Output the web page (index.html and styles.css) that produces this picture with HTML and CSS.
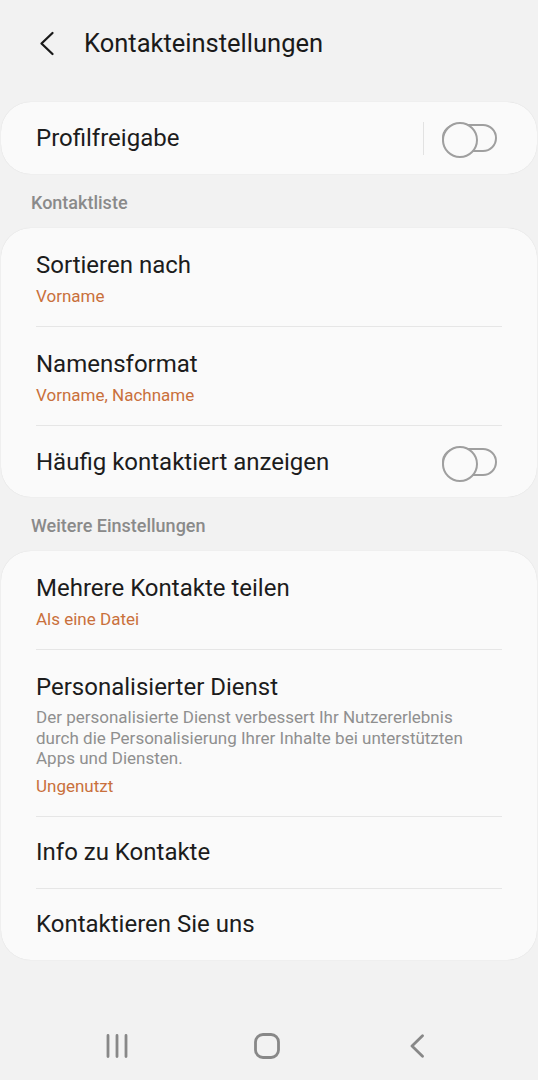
FILE: index.html
```html
<!DOCTYPE html>
<html lang="de">
<head>
  <meta charset="UTF-8" />
  <meta name="viewport" content="width=device-width, initial-scale=1.0"/>
  <title>Kontakteinstellungen</title>
  <link rel="stylesheet" href="styles.css">
</head>
<body>
  <div class="app-bar">
    <a href="#" class="back-btn" aria-label="Zurück">
      <svg width="16" height="25" viewBox="0 0 16 25">
        <path d="M13.5 2 L2.5 12.5 L13.5 23" fill="none" stroke="#1a1a1a" stroke-width="2.3" stroke-linecap="round" stroke-linejoin="round"/>
      </svg>
    </a>
    <h1>Kontakteinstellungen</h1>
  </div>

  <main class="content">
    <div class="card">
      <div class="row single">
        <span class="title">Profilfreigabe</span>
        <span class="split"></span>
        <span class="switch"></span>
      </div>
    </div>

    <div class="section-label">Kontaktliste</div>
    <div class="card">
      <div class="row">
        <div class="texts">
          <div class="title">Sortieren nach</div>
          <div class="value">Vorname</div>
        </div>
      </div>
      <div class="row">
        <div class="texts">
          <div class="title">Namensformat</div>
          <div class="value">Vorname, Nachname</div>
        </div>
      </div>
      <div class="row single">
        <span class="title">Häufig kontaktiert anzeigen</span>
        <span class="switch"></span>
      </div>
    </div>

    <div class="section-label">Weitere Einstellungen</div>
    <div class="card">
      <div class="row">
        <div class="texts">
          <div class="title">Mehrere Kontakte teilen</div>
          <div class="value">Als eine Datei</div>
        </div>
      </div>
      <div class="row tall">
        <div class="texts">
          <div class="title">Personalisierter Dienst</div>
          <div class="desc">Der personalisierte Dienst verbessert Ihr Nutzererlebnis durch die Personalisierung Ihrer Inhalte bei unterstützten Apps und Diensten.</div>
          <div class="value">Ungenutzt</div>
        </div>
      </div>
      <div class="row single">
        <span class="title">Info zu Kontakte</span>
      </div>
      <div class="row single">
        <span class="title">Kontaktieren Sie uns</span>
      </div>
    </div>
  </main>

  <nav class="nav-bar">
    <span class="nav-item">
      <svg width="24" height="24" viewBox="0 0 24 24">
        <path d="M3 1.5 V22.5 M12 1.5 V22.5 M21 1.5 V22.5" stroke="#888" stroke-width="2.8" stroke-linecap="round"/>
      </svg>
    </span>
    <span class="nav-item">
      <svg width="26" height="26" viewBox="0 0 26 26">
        <rect x="1.5" y="1.5" width="23" height="23" rx="7.5" fill="none" stroke="#888" stroke-width="2.8"/>
      </svg>
    </span>
    <span class="nav-item">
      <svg width="16" height="24" viewBox="0 0 16 24">
        <path d="M13.5 1.8 L3 12 L13.5 22.2" fill="none" stroke="#888" stroke-width="2.8" stroke-linecap="round" stroke-linejoin="round"/>
      </svg>
    </span>
  </nav>
</body>
</html>
```

FILE: styles.css
```css
/* Basic resets & layout */
* {
  box-sizing: border-box;
}

body {
  margin: 0;
  min-height: 100vh;
  display: flex;
  flex-direction: column;
  font-family: Roboto, "Noto Sans", sans-serif;
  background: #f2f2f2;
  color: #1c1c1c;
}

/* Top app bar */
.app-bar {
  height: 86px;
  display: flex;
  align-items: center;
  padding-left: 39px;
}

.back-btn {
  display: flex;
  width: 16px;
  margin-right: 29px;
}

.app-bar h1 {
  margin: 0;
  font-size: 25.5px;
  font-weight: 400;
  color: #1a1a1a;
}

.content {
  padding: 16px 1px 0;
}

/* Cards */
.card {
  background: #fafafa;
  border-radius: 30px;
  box-shadow: 0 0 1px rgba(0, 0, 0, 0.14);
}

.section-label {
  padding: 19px 30px 0;
  height: 54px;
  line-height: 20px;
  font-size: 18px;
  font-weight: 500;
  color: #8a8a8a;
}

.row {
  margin: 0 35px;
  padding: 23px 0 19px;
  border-top: 1px solid #e6e6e6;
  display: flex;
  align-items: center;
}

.row:first-child {
  border-top: none;
}

.row.single {
  padding: 0;
  height: 72px;
}

.title {
  flex: 1;
  font-size: 24px;
  line-height: 28px;
  color: #1c1c1c;
}

.value {
  margin-top: 6px;
  font-size: 17px;
  line-height: 22px;
  color: #c9703c;
}

.desc {
  max-width: 440px;
  margin-top: 6px;
  font-size: 17px;
  line-height: 20.5px;
  color: #8f8f8f;
}

.tall {
  padding-top: 23px;
}

.tall .value {
  margin-top: 6px;
}

/* Toggle switch */
.split {
  width: 1px;
  height: 33px;
  background: #e2e2e2;
  margin-right: 18px;
}

.switch {
  position: relative;
  width: 55px;
  height: 28px;
  margin-right: 5px;
  border: 2px solid #9f9f9f;
  border-radius: 14px;
}

.switch::before {
  content: "";
  position: absolute;
  left: -2px;
  top: -4px;
  width: 32px;
  height: 32px;
  border: 2px solid #9f9f9f;
  border-radius: 50%;
  background: #fafafa;
}

/* Bottom navigation */
.nav-bar {
  margin-top: auto;
  height: 68px;
  display: flex;
  justify-content: center;
  align-items: center;
  padding-right: 4px;
}

.nav-item {
  width: 150px;
  display: flex;
  justify-content: center;
}
```
